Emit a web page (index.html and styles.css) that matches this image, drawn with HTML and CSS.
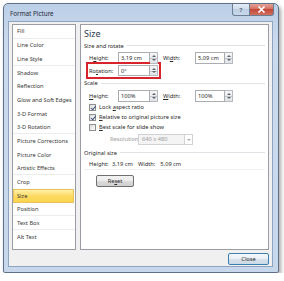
FILE: index.html
```html
<!DOCTYPE html>
<html lang="en">
<head>
  <meta charset="UTF-8" />
  <title>Format Picture</title>
  <link rel="stylesheet" href="styles.css">
</head>
<body>
  <div class="window">
    <div class="titlebar">
      <span class="title">Format Picture</span>
      <div class="caption">
        <span class="cap-btn help">?</span>
        <span class="cap-btn close">
          <svg width="9" height="7" viewBox="0 0 9 7"><path d="M1.5 0.5 L7.5 6.5 M7.5 0.5 L1.5 6.5" stroke="#fff" stroke-width="1.6"/></svg>
        </span>
      </div>
    </div>

    <div class="client">
      <div class="panes">
        <ul class="nav">
          <li class="sep">Fill</li>
          <li>Line Color</li>
          <li class="sep">Line Style</li>
          <li>Shadow</li>
          <li>Reflection</li>
          <li>Glow and Soft Edges</li>
          <li>3-D Format</li>
          <li class="sep">3-D Rotation</li>
          <li>Picture Corrections</li>
          <li>Picture Color</li>
          <li class="sep">Artistic Effects</li>
          <li>Crop</li>
          <li class="selected">Size</li>
          <li class="sep">Position</li>
          <li class="sep">Text Box</li>
          <li>Alt Text</li>
        </ul>

        <div class="page">
          <div class="heading">Size</div>

          <div class="group">Size and rotate</div>
          <div class="row">
            <span class="label">H<u>e</u>ight:</span>
            <span class="field"><span class="input">3,19 cm</span><span class="spin"></span></span>
            <span class="label label-w">Wi<u>d</u>th:</span>
            <span class="field wide"><span class="input">5,09 cm</span><span class="spin"></span></span>
          </div>
          <div class="row">
            <span class="marked">
              <span class="label">Ro<u>t</u>ation:</span>
              <span class="field"><span class="input">0°</span><span class="spin"></span></span>
            </span>
          </div>

          <div class="group group-scale">Scale</div>
          <div class="row">
            <span class="label"><u>H</u>eight:</span>
            <span class="field"><span class="input">100%</span><span class="spin"></span></span>
            <span class="label label-w"><u>W</u>idth:</span>
            <span class="field wide"><span class="input">100%</span><span class="spin"></span></span>
          </div>
          <div class="check-row"><span class="box checked"></span><span>Lock <u>a</u>spect ratio</span></div>
          <div class="check-row"><span class="box checked"></span><span><u>R</u>elative to original picture size</span></div>
          <div class="check-row"><span class="box"></span><span><u>B</u>est scale for slide show</span></div>
          <div class="res-row">
            <span class="res-label">Resolution</span>
            <span class="combo"><span class="combo-text">640 x 480</span><span class="combo-arrow"></span></span>
          </div>

          <div class="group group-orig">Original size</div>
          <div class="info-row">
            <span class="info-label">Height:</span>
            <span class="value">3,19 cm</span>
            <span class="info-w">Width:</span>
            <span>5,09 cm</span>
          </div>
          <button class="btn reset">Re<u>s</u>et</button>
        </div>
      </div>

      <div class="footer">
        <button class="btn default">Close</button>
      </div>
    </div>
  </div>
</body>
</html>
```

FILE: styles.css
```css
body {
  margin: 0;
  background: white;
  font-family: "Noto Sans", "Open Sans", sans-serif;
  font-size: 5.7px;
  color: #2b2b2b;
}

/* window frame */
.window {
  margin: 3px 0 0 3px;
  width: 276px;
  height: 270px;
  box-sizing: border-box;
  border: 1px solid #5f7188;
  border-radius: 5px 5px 2px 2px;
  padding: 0 5px 5px 4px;
  background: linear-gradient(#bccfe7, #cbdaed 40px, #c8d8ec);
  box-shadow: 2px 3px 4px rgba(0, 0, 0, 0.35);
  display: flex;
  flex-direction: column;
}
.titlebar {
  height: 17px;
  display: flex;
  align-items: flex-start;
}
.title {
  margin: 5px 0 0 2px;
  font-size: 6.3px;
  color: #1f2a38;
}
.caption {
  margin-left: auto;
  margin-right: -1px;
  display: flex;
}
.cap-btn {
  height: 12px;
  display: flex;
  align-items: center;
  justify-content: center;
  border: 1px solid #6d7d92;
  border-top: none;
  box-sizing: border-box;
}
.help {
  width: 18px;
  border-radius: 0 0 0 3px;
  background: linear-gradient(#e4ecf6, #cfdcec 50%, #bfd0e6 50%, #c9d8ea);
  color: #5a6a80;
  font-weight: bold;
  font-size: 6px;
}
.close {
  width: 24px;
  border-left: none;
  border-radius: 0 0 3px 0;
  background: linear-gradient(#e3a397, #d4695a 50%, #c4483a 50%, #d0705f);
}

.client {
  flex: 1;
  background: #f0f0f0;
  border: 1px solid #8fa4bf;
  padding: 2px 3px 0 3px;
  display: flex;
  flex-direction: column;
}
.panes {
  display: flex;
  gap: 4px;
  height: 226px;
}

/* 左側清單 */
.nav {
  list-style: none;
  margin: 0;
  padding: 0;
  width: 64px;
  box-sizing: border-box;
  background: white;
  border: 1px solid #9a9da3;
}
.nav li {
  height: 13.67px;
  box-sizing: border-box;
  padding-left: 4px;
  display: flex;
  align-items: center;
  color: #3a3a3a;
  white-space: nowrap;
}
.nav li.sep {
  border-bottom: 1px solid #ececec;
}
.nav li.selected {
  margin: 0 1px 0 0;
  background: linear-gradient(#fff0a8, #fcd85e 55%, #fbd54f);
  border: 1px solid #e8c15a;
  padding-left: 3px;
}

/* 右側頁面 */
.page {
  width: 189px;
  box-sizing: border-box;
  background: white;
  border: 1px solid #9a9da3;
  padding: 3px 3px 0 3px;
}
.heading {
  height: 12px;
  font-size: 9px;
  line-height: 12px;
  color: #2b3a4e;
}
.group {
  height: 11px;
  display: flex;
  align-items: center;
  gap: 3px;
  color: #2b2b2b;
}
.group::after {
  content: "";
  flex: 1;
  border-top: 1px solid #dfe3e8;
}
.group-scale {
  height: 12px;
}
.group-orig {
  height: 13px;
}
.row {
  height: 13px;
  display: flex;
  align-items: center;
  padding-left: 5px;
}
.label {
  width: 29px;
  white-space: nowrap;
}
.label-w {
  width: 32px;
  margin-left: 5px;
}
.field {
  display: flex;
  height: 12px;
}
.input {
  width: 32px;
  box-sizing: border-box;
  border: 1px solid #abadb3;
  padding-left: 2px;
  display: flex;
  align-items: center;
  white-space: nowrap;
}
.field.wide .input {
  width: 30px;
}
.spin {
  width: 8px;
  box-sizing: border-box;
  border: 1px solid #b5b9c0;
  border-left: none;
  background:
    linear-gradient(to bottom, transparent 5px, #c4c8ce 5px, #c4c8ce 6px, transparent 6px),
    linear-gradient(#f6f6f6, #e2e4e7);
  position: relative;
}
.spin::before,
.spin::after {
  content: "";
  position: absolute;
  left: 1.5px;
  border-left: 2px solid transparent;
  border-right: 2px solid transparent;
}
.spin::before {
  top: 2px;
  border-bottom: 2px solid #5d6670;
}
.spin::after {
  bottom: 2px;
  border-top: 2px solid #5d6670;
}
.marked {
  display: flex;
  align-items: center;
  outline: 2px solid #d8232a;
  outline-offset: 1px;
  height: 11px;
}
.marked .field {
  height: 11px;
}

.check-row {
  height: 10px;
  display: flex;
  align-items: center;
  padding-left: 5px;
  gap: 3px;
  white-space: nowrap;
}
.box {
  width: 7px;
  height: 7px;
  box-sizing: border-box;
  border: 1px solid #8e8f8f;
  background: linear-gradient(135deg, #dcdcdc, #fbfbfb);
  position: relative;
}
.box.checked::after {
  content: "";
  position: absolute;
  left: 1.5px;
  top: 0;
  width: 2px;
  height: 3.5px;
  border-right: 1.2px solid #3d4f7d;
  border-bottom: 1.2px solid #3d4f7d;
  transform: rotate(40deg);
}

.res-row {
  height: 14px;
  display: flex;
  align-items: center;
  padding-left: 26px;
  color: #9c9c9c;
}
.res-label {
  width: 28px;
}
.combo {
  display: flex;
  height: 11px;
  border: 1px solid #d0d2d6;
  box-sizing: border-box;
}
.combo-text {
  width: 42px;
  padding-left: 3px;
  display: flex;
  align-items: center;
  background: #f4f4f4;
}
.combo-arrow {
  width: 7px;
  border-left: 1px solid #d0d2d6;
  position: relative;
}
.combo-arrow::after {
  content: "";
  position: absolute;
  left: 1.5px;
  top: 4px;
  border-left: 2px solid transparent;
  border-right: 2px solid transparent;
  border-top: 2px solid #a9a9a9;
}

.info-row {
  height: 10px;
  display: flex;
  align-items: center;
  padding-left: 5px;
  border-bottom: 1px solid #eef0f2;
  white-space: nowrap;
}
.info-label {
  width: 23px;
}
.info-row .value {
  width: 26px;
}
.info-w {
  margin-right: 5px;
}

.btn {
  font-family: inherit;
  font-size: 5.7px;
  color: #2b2b2b;
  height: 12px;
  padding: 0;
  box-sizing: border-box;
  border: 1px solid #707070;
  border-radius: 2px;
  background: linear-gradient(#f2f2f2, #ebebeb 50%, #dddddd 50%, #cfcfcf);
}
.reset {
  display: block;
  width: 38px;
  margin: 5px 0 0 12px;
}
.footer {
  display: flex;
  justify-content: flex-end;
  padding-top: 3px;
}
.default {
  width: 41px;
  border-color: #3c7fb1;
  background: linear-gradient(#f4f8fb, #e8eff5 50%, #d8e3ec 50%, #ccd9e4);
}
```
